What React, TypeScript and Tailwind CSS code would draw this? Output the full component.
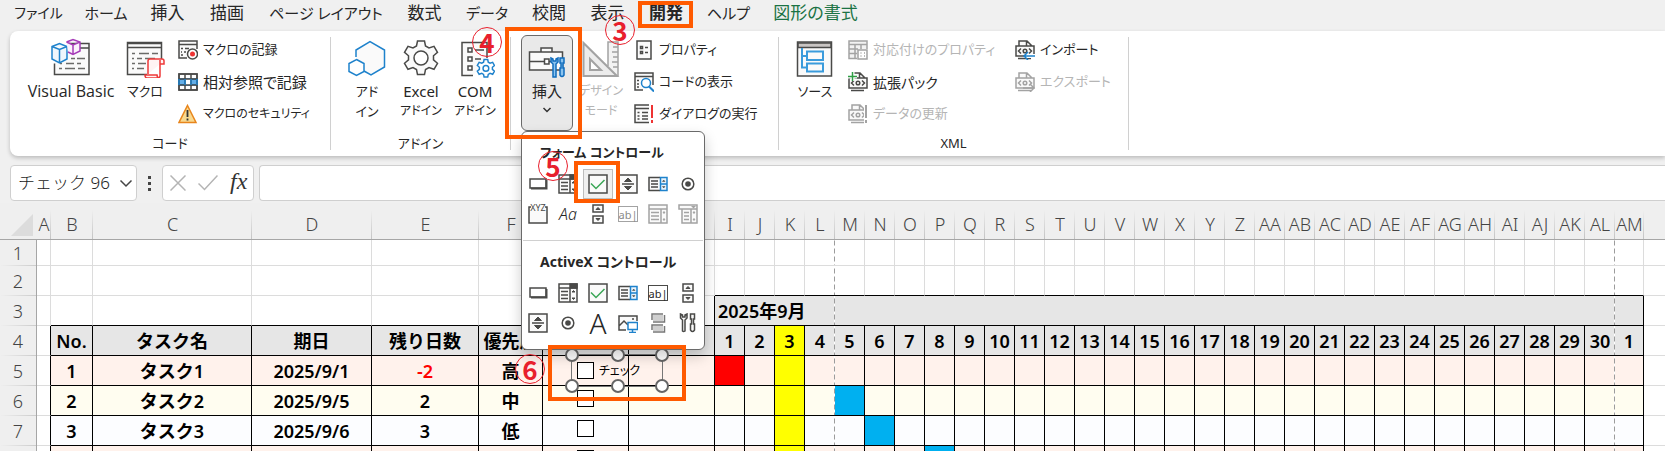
import React from 'react';
import { clsx } from 'clsx';

const INK = '#4a4a48';
const BLUE = '#1e82cc';
const MUTED = '#a3a3a3';

const tabs = [
  { label: 'ファイル', className: 'w-[71px] text-[14px]' },
  { label: 'ホーム', className: 'w-[64px] text-[15px]' },
  { label: '挿入', className: 'w-[59px] text-[17px]' },
  { label: '描画', className: 'w-[60px] text-[17px]' },
  { label: 'ページ レイアウト', className: 'w-[138px] text-[15px]' },
  { label: '数式', className: 'w-[59px] text-[17px]' },
  { label: 'データ', className: 'w-[66px] text-[15px]' },
  { label: '校閲', className: 'w-[58px] text-[17px]' },
  { label: '表示', className: 'w-[59px] text-[17px]' },
  { label: '開発', className: 'w-[58px] text-[17px] font-bold' },
  { label: 'ヘルプ', className: 'w-[67px] text-[15px]' },
  { label: '図形の書式', className: 'w-[107px] text-[17px] text-[#1b7344]' },
];

/* ---------- Large ribbon icons (40x40) ---------- */

const Large: React.FC<{ children: React.ReactNode }> = ({ children }) => (
  <svg width="40" height="40" viewBox="0 0 40 40" fill="none" stroke={INK} strokeWidth="1.5" aria-hidden="true">
    {children}
  </svg>
);

const VisualBasicIcon = () => (
  <Large>
    <path d="M17 5.5h21v31H3.500v-11M28 10h10" fill="#fafafa" />
    <path d="M20 20.500h4M26 20.500h8M9 25.500h2M15 25.500h8M26 25.500h4M8 30.500h3M14 30.500h10M27 30.500h7" stroke="#6b6b69" />
    <path d="M1 8.500 8.500 5.500 16 8.500v12.500L8.500 25 1 21ZM1 8.500l7.500 3 7.500-3M8.500 11.500V25" stroke={BLUE} fill="#eef6fc" />
    <path d="M15.500 4 22 1.500 29 4v9l-7 3.500-5-2.500M15.500 4 22 7l7-3M22 7v9.500" stroke="#a63db8" fill="#fbf1fc" />
  </Large>
);

const MacroIcon = () => (
  <Large>
    <path d="M22 36.500H2.500v-32h34V21" fill="#fafafa" />
    <path d="M2.500 5.500h34M2.500 9.500h34" />
    <path d="M7 15.500h3M14 15.500h10M27 15.500h6M7 20.500h2M12 20.500h5M20 20.500h10M7 25.500h3M13 25.500h8M7 30.500h2M12 30.500h7" stroke="#6b6b69" />
    <path d="M23 36V23q0-2 2-2h12q2 0 2 2v3h-4M35 22v16M35 38q0 2-3 2H22q-2 0-2-3h12q0 3 3 3" stroke="#ee3a3a" fill="#fff4f4" />
  </Large>
);

const AddinIcon = () => (
  <Large>
    <path d="M9 19V12L23 3.500l14.500 8.500v17L24 37l-7-4" stroke={BLUE} fill="#fafafa" />
    <path d="M9.500 21.500l7.500 4v8l-7.500 4-7.500-4v-8Z" stroke={BLUE} fill="#fff" />
  </Large>
);

const GEAR =
  'M16.500 3h7l1 5 3.500 2 5-1.700 3.500 6-4 3.500v4l4 3.500-3.500 6-5-1.700-3.500 2-1 5h-7l-1-5-3.500-2-5 1.700-3.500-6 4-3.500v-4l-4-3.500 3.500-6 5 1.700 3.500-2Z';

const ExcelAddinIcon = () => (
  <Large>
    <path d={GEAR} fill="#fafafa" />
    <circle cx="20" cy="20" r="7" fill="#fff" />
  </Large>
);

const ComAddinIcon = () => (
  <Large>
    <path d="M18 37.500H7v-33h25V20" fill="#fafafa" />
    <path d="M13 10h4v4h-4zM13 19h4v4h-4zM13 28h4v4h-4zM20 12h9M20 21h6" />
    <g transform="translate(20.500 20) scale(.52)" stroke={BLUE} strokeWidth="2.800">
      <path d={GEAR} fill="#fff" />
      <circle cx="20" cy="20" r="5.500" />
    </g>
  </Large>
);

const ToolboxIcon = () => (
  <Large>
    <path d="M2.500 14h33v18h-33zM14 14v-4h11v4M2.500 23.500h15M22 23.500h5" fill="#fafafa" />
    <path d="M17.500 21h4.500v5h-4.500z" fill="#fff" />
    <path d="M24 20v4l2 2v13h3V26l2-2v-4l-2 1v2h-3v-2z" stroke="#0f6cbd" fill="#8cc4ef" />
    <path d="M33 20h4v5h-1v5h1v7q-2 3-4 0v-7h1v-5h-1z" stroke="#0f6cbd" fill="#8cc4ef" />
  </Large>
);

const DesignIcon = () => (
  <Large>
    <path d="M27 28V4h10v34M37 9h-5M37 14h-6M37 19h-5M37 24h-6M37 29h-5" stroke={MUTED} fill="#f3f3f3" />
    <path d="M2.500 5v33H36ZM9 21v11h11Z" stroke={MUTED} fill="#ececec" fillRule="evenodd" strokeWidth="2" />
  </Large>
);

const SourceIcon = () => (
  <Large>
    <path d="M2.500 4h34v34h-34z" fill="#fafafa" />
    <path d="M3 5h33v4.500H3z" fill="#c9c5c3" />
    <path d="M7 10v19.500h4M7 18h4M12 13.500h16v8.500H12zM12 25.500h16v8H12z" stroke="#3a9bdc" strokeWidth="2" />
  </Large>
);

/* ---------- Small icons (20x20) ---------- */

const Small: React.FC<{ children: React.ReactNode; color?: string }> = ({ children, color = INK }) => (
  <svg width="20" height="20" viewBox="0 0 20 20" fill="none" stroke={color} strokeWidth="1.500" className="shrink-0" aria-hidden="true">
    {children}
  </svg>
);

const RecordIcon = () => (
  <Small>
    <path d="M9 18H1V1h18v8M1 4.500h18" fill="#fafafa" />
    <path d="M3 8.500h2M7 8.500h4M3 12h1M6 12h2M3 15h2" />
    <circle cx="14.500" cy="14" r="5" fill="#fff" />
    <circle cx="14.500" cy="14" r="2.500" fill="#e33" stroke="none" />
  </Small>
);

const RelativeIcon = () => (
  <Small>
    <path d="M1 2h18v16H1z" fill="#fff" />
    <path d="M1 7h18v6H1z" fill="#63aee8" stroke={BLUE} />
    <path d="M7.500 7h5v6h-5z" fill="#fff" stroke="none" />
    <path d="M1 2h18v16H1zM7 2v16M13 2v16M1 7h18M1 13h18" />
    <path d="M1 7v6M7 7v6M19 7v6M13 7v6" stroke={BLUE} />
  </Small>
);

const WarningIcon = () => (
  <Small color="#e8851c">
    <path d="M9.500 1.500 18 18.500H1Z" fill="#f9d98f" />
    <path d="M9.500 6v7M9.500 14.500v2" stroke="#333" strokeWidth="1.800" />
  </Small>
);

const PropertiesIcon = () => (
  <Small>
    <path d="M3 1h14v18H3z" fill="#fafafa" />
    <path d="M6.500 6.500h2v2h-2zM6.500 11.500h2v2h-2zM11 7.500h3M11 12.500h3" />
  </Small>
);

const ViewCodeIcon = () => (
  <Small>
    <path d="M9 18H1V1h18v12M1 4.500h18M3 8.500h2M3 12h2M3 15h2" fill="#fafafa" />
    <circle cx="12" cy="11" r="4.500" stroke={BLUE} fill="#fff" />
    <path d="m15 14.500 5 5" stroke={BLUE} strokeWidth="2" />
  </Small>
);

const RunDialogIcon = () => (
  <Small>
    <path d="M15 18.500H1V1h14M1 4.500h14" fill="#fafafa" />
    <path d="M3.500 8.500h2M8 8.500h6M3.500 12h2M8 12h6M3.500 15h2M8 15h6" />
    <path d="M18 1v13M18 16v3" stroke="#e33" strokeWidth="2" />
  </Small>
);

const MapPropertiesIcon = () => (
  <Small color={MUTED}>
    <path d="M9 18.500H1V1h18v8M1 4.500h18M1 9h9M1 13.500h8M7 4v14M13 4v5" fill="#f2f2f2" />
    <path d="M10 10h9v9h-9zM12.500 13h1M16 13h1M12.500 16h1M16 16h1" fill="#fff" />
  </Small>
);

const XmlDoc: React.FC<{ color?: string; children?: React.ReactNode }> = ({ color = INK, children }) => (
  <Small color={color}>
    <path d="M4 6V1h8l5 5M11.500 1v5M3 18.500h13M1 6h18v10H1z" fill="#fafafa" />
    <path d="M6 8.500 3.500 11 6 13.500M14 8.500l2.500 2.500-2.500 2.500" />
    <circle cx="10" cy="11" r="1.800" />
    {children}
  </Small>
);

/* ---------- Toolbox gallery icons ---------- */

const ButtonIcon = () => (
  <Small>
    <path d="M2 5h16v9H2z" fill="#fff" />
    <path d="M3 14.500h15.500V6" strokeWidth="2" />
  </Small>
);

const ComboIcon = ({ color = INK }: { color?: string }) => (
  <Small color={color}>
    <path d="M1 1h18v18H1zM1 5h18M12 5v14" fill="#fafafa" />
    <path d="M3 8.500h7M3 12h7M3 15.500h7" />
    <path d="M12 1h7v4h-7z" fill={color} />
    <path d="m14 9 1.500-1.500L17 9zM14 15l1.500 1.500L17 15z" fill={color} strokeWidth="1" />
  </Small>
);

const ListBoxIcon = ({ color = INK }: { color?: string }) => (
  <Small color={color}>
    <path d="M1 1h18v18H1zM1 5h18M13 5v14" fill="#fafafa" />
    <path d="M3 8.500h8M3 12h8M3 15.500h8" />
    <path d="m15 9 1-1.500L17 9zM15 15l1 1.500 1-1.500z" fill={color} strokeWidth="1" />
  </Small>
);

const ComboEditIcon = () => (
  <Small color={MUTED}>
    <path d="M1 1h18v4H1zM4 5v14h15V5M13 5v14M6 8.500h5M6 12h5M6 15.500h5" fill="#fafafa" />
    <path d="m15 9 1-1.500L17 9zM15 15l1 1.500 1-1.500z" fill={MUTED} strokeWidth="1" />
    <path d="M13 2h5l-2.500 2.500z" fill={MUTED} strokeWidth="0" />
  </Small>
);

const CheckIcon = () => (
  <Small>
    <path d="M1 1h18v18H1z" fill="#fafafa" />
    <path d="m3 9.500 5 5 8.500-8.500" stroke="#3aa655" strokeWidth="1.500" />
  </Small>
);

const SpinIcon = () => (
  <Small>
    <path d="M1 1h18v18H1zM4 10h12" fill="#fafafa" />
    <path d="m6.500 7.500 3.500-3.500 3.500 3.500zM6.500 12.500l3.500 3.500 3.500-3.500z" fill={INK} strokeWidth="1" />
  </Small>
);

const ListIcon = () => (
  <Small>
    <path d="M12 3.500H1v13h11M3 7h7M3 10h7M3 13h7" fill="#fafafa" />
    <path d="M12.500 3.500H19v13h-6.500zM12.500 10H19" stroke={BLUE} fill="#e8f3fc" />
    <path d="m14.500 7.500 1.200-1.500L17 7.500zM14.500 12.500l1.200 1.500 1.300-1.500z" fill={INK} strokeWidth=".5" />
  </Small>
);

const RadioIcon = () => (
  <Small>
    <circle cx="10" cy="10" r="5.800" fill="#fff" />
    <circle cx="10" cy="10" r="2.800" fill={INK} stroke="none" />
  </Small>
);

const GroupBoxIcon = () => (
  <Small>
    <path d="M3 3H1v16h18V3h-2" fill="#fafafa" />
    <text x="10" y="7" fontSize="9" textAnchor="middle" fill={INK} stroke="none">
      XYZ
    </text>
  </Small>
);

const ScrollIcon = () => (
  <Small>
    <path d="M5 1h10v7H5zM5 12h10v7H5z" fill="#fafafa" />
    <path d="m8 5.500 2-2 2 2zM8 14.500l2 2 2-2z" fill={INK} strokeWidth="1" />
  </Small>
);

const ImageIcon = () => (
  <Small>
    <path d="M8 17H1V3h18v5M1 13l5-5 4 4M14 6h2" fill="#fafafa" />
    <path d="M10 9.500h9.500v7H10zM14.500 17v2.500M11 19.500h7" stroke={BLUE} fill="#fff" />
  </Small>
);

const ToggleIcon = () => (
  <Small color="#777">
    <path d="M4 7V1h11M16.500 2v7H5M16.500 13v6H5M4 17v-5h11" />
    <path d="M5 2h10v6H5zM5 13h10v5H5z" fill="#cfcfcf" stroke="none" />
  </Small>
);

const ToolsIcon = () => (
  <Small>
    <path d="M2.500 1v4l2 2v11q1 1 2.500 0V7l2-2V1L7 2v2H4.500V2z" fill="#fafafa" />
    <path d="M12.500 1h4v5h-1v5h1v6q-2 3-4 0v-6h1V6h-1z" fill="#fafafa" />
  </Small>
);

const TextGlyph: React.FC<{ text: string; className: string }> = ({ text, className }) => (
  <span className={clsx('flex items-center justify-center leading-none', className)}>{text}</span>
);

const formControls = [
  { name: 'ボタン', icon: <ButtonIcon /> },
  { name: 'コンボ ボックス', icon: <ComboIcon /> },
  { name: 'チェック ボックス', icon: <CheckIcon />, active: true },
  { name: 'スピン ボタン', icon: <SpinIcon /> },
  { name: 'リスト ボックス', icon: <ListIcon /> },
  { name: 'オプション ボタン', icon: <RadioIcon /> },
  { name: 'グループ ボックス', icon: <GroupBoxIcon /> },
  { name: 'ラベル', icon: <TextGlyph text="Aa" className="text-[16px] font-light italic" /> },
  { name: 'スクロール バー', icon: <ScrollIcon /> },
  { name: 'テキスト フィールド', icon: <TextGlyph text="ab|" className="h-4 w-5 border border-[#a3a3a3] text-[11px] text-[#8a8a8a]" /> },
  { name: 'コンボ リスト', icon: <ListBoxIcon color={MUTED} /> },
  { name: 'コンボ ドロップダウン', icon: <ComboEditIcon /> },
];

const activeXControls = [
  { name: 'コマンド ボタン', icon: <ButtonIcon /> },
  { name: 'コンボ ボックス', icon: <ComboIcon /> },
  { name: 'チェック ボックス', icon: <CheckIcon /> },
  { name: 'リスト ボックス', icon: <ListIcon /> },
  { name: 'テキスト ボックス', icon: <TextGlyph text="ab|" className="h-4 w-5 border border-[#4a4a48] text-[11px]" /> },
  { name: 'スクロール バー', icon: <ScrollIcon /> },
  { name: 'スピン ボタン', icon: <SpinIcon /> },
  { name: 'オプション ボタン', icon: <RadioIcon /> },
  { name: 'ラベル', icon: <TextGlyph text="A" className="text-[28px] font-light" /> },
  { name: 'イメージ', icon: <ImageIcon /> },
  { name: 'トグル ボタン', icon: <ToggleIcon /> },
  { name: 'コントロールの選択', icon: <ToolsIcon /> },
];

interface GalleryProps {
  title: string;
  titleClass: string;
  items: { name: string; icon: React.ReactNode; active?: boolean }[];
}

const Gallery: React.FC<GalleryProps> = ({ title, titleClass, items }) => (
  <section>
    <h2 className={clsx('flex h-[37px] items-center pt-1 pl-[17px] font-bold whitespace-nowrap', titleClass)}>{title}</h2>
    <div className="grid w-[180px] grid-cols-6">
      {items.map(item => (
        <button
          key={item.name}
          aria-label={item.name}
          className={clsx(
            'flex size-[30px] items-center justify-center border',
            item.active ? 'border-[#bdbdbd] bg-[#f0f0f0]' : 'border-transparent'
          )}
        >
          {item.icon}
        </button>
      ))}
    </div>
  </section>
);

/* ---------- Ribbon pieces ---------- */

const BigButton: React.FC<{ icon: React.ReactNode; lines: string[]; className: string }> = ({ icon, lines, className }) => (
  <button className={clsx('flex flex-col items-center pt-[7px] leading-5 whitespace-nowrap', className)}>
    {icon}
    <span className="flex flex-col items-center pt-[3px]">
      {lines.map(line => (
        <span key={line}>{line}</span>
      ))}
    </span>
  </button>
);

const SmallButton: React.FC<{ icon: React.ReactNode; label: string; className?: string; disabled?: boolean }> = ({
  icon,
  label,
  className = 'text-[15px]',
  disabled
}) => (
  <button disabled={disabled} className={clsx('flex h-8 items-center gap-[5px] whitespace-nowrap', className, disabled && 'text-[#b5b5b5]')}>
    {icon}
    <span>{label}</span>
  </button>
);

const Group: React.FC<{ label?: string; className: string; children: React.ReactNode }> = ({ label, className, children }) => (
  <>
    <div className={clsx('flex shrink-0 flex-col', className)}>
      <div className="flex flex-1 items-start">{children}</div>
      {label && <div className="pb-[3px] text-center text-[13px] leading-5">{label}</div>}
    </div>
    <div className="my-1.5 w-px shrink-0 bg-[#d0d0d0]" />
  </>
);

const Ribbon = () => (
  <div className="relative z-20 ml-2.5 flex h-[125px] shrink-0 rounded-l-lg bg-white text-[#262626] shadow-[0_2px_4px_rgba(0,0,0,0.22)]">
    <Group label="コード" className="w-[320px]">
      <BigButton icon={<VisualBasicIcon />} lines={['Visual Basic']} className="ml-2.5 w-[102px] font-['Open_Sans','Noto_Sans_CJK_JP',sans-serif] text-[16px]" />
      <BigButton icon={<MacroIcon />} lines={['マクロ']} className="w-[46px] text-[13px]" />
      <div className="mt-[3px] ml-2.5">
        <SmallButton icon={<RecordIcon />} label="マクロの記録" className="text-[13px]" />
        <SmallButton icon={<RelativeIcon />} label="相対参照で記録" />
        <SmallButton icon={<WarningIcon />} label="マクロのセキュリティ" className="text-[12px]" />
      </div>
    </Group>
    <Group label="アドイン" className="w-[179px]">
      <BigButton icon={<AddinIcon />} lines={['アド', 'イン']} className="ml-[9px] w-[54px] text-[13px]" />
      <BigButton icon={<ExcelAddinIcon />} lines={['Excel', 'アドイン']} className="w-[54px] text-[12px] [&>span>span:first-child]:text-[15px]" />
      <BigButton icon={<ComAddinIcon />} lines={['COM', 'アドイン']} className="w-[54px] text-[12px] [&>span>span:first-child]:text-[15px]" />
    </Group>
    <Group className="w-[267px]">
      <div className="relative mt-1 ml-2.5">
        <button
          aria-expanded="true"
          className="flex h-24 w-[52px] flex-col items-center rounded-md border border-[#6a6a6a] bg-[#e9e9e9] pt-0.5 leading-5"
        >
          <ToolboxIcon />
          <span className="pt-[3px] text-[15px]">挿入</span>
          <svg width="10" height="6" viewBox="0 0 10 6" fill="none" stroke="#333" strokeWidth="1.500" className="mt-1.5" aria-hidden="true">
            <path d="m1.500 1 3.500 3.500L8.500 1" />
          </svg>
        </button>
        <div className="absolute top-24 left-0 w-[184px] rounded-md border border-[#6a6a6a] bg-white pb-[11px] pl-px shadow-[0_6px_14px_rgba(0,0,0,0.2)]">
          <Gallery title="フォーム コントロール" titleClass="text-[13px]" items={formControls} />
          <div className="mt-[11px] mr-px h-px bg-[#d0d0d0]" />
          <Gallery title="ActiveX コントロール" titleClass="text-[14px]" items={activeXControls} />
        </div>
      </div>
      <BigButton icon={<DesignIcon />} lines={['デザイン', 'モード']} className="ml-px w-[54px] text-[12px] text-[#b5b5b5]" />
      <div className="mt-[3px] ml-1.5">
        <SmallButton icon={<PropertiesIcon />} label="プロパティ" className="text-[13px]" />
        <SmallButton icon={<ViewCodeIcon />} label="コードの表示" className="text-[13px]" />
        <SmallButton icon={<RunDialogIcon />} label="ダイアログの実行" className="text-[13px]" />
      </div>
    </Group>
    <Group label="XML" className="w-[349px]">
      <BigButton icon={<SourceIcon />} lines={['ソース']} className="ml-[11px] w-[50px] text-[13px]" />
      <div className="mt-[3px] ml-2 w-[167px]">
        <SmallButton icon={<MapPropertiesIcon />} label="対応付けのプロパティ" className="text-[13px]" disabled />
        <SmallButton
          icon={
            <XmlDoc>
              <path d="M4.500 0v9M0 4.500h9" stroke="#fff" strokeWidth="4" />
              <path d="M4.500 0v9M0 4.500h9" stroke="#2f9e44" />
            </XmlDoc>
          }
          label="拡張パック"
          className="text-[14px]"
        />
        <SmallButton
          icon={
            <XmlDoc color={MUTED}>
              <path d="M18 1v18" stroke="#fff" strokeWidth="4" />
              <path d="M18 1v13M18 16v3" strokeWidth="2" />
            </XmlDoc>
          }
          label="データの更新"
          className="text-[13px]"
          disabled
        />
      </div>
      <div className="mt-[3px]">
        <SmallButton
          icon={
            <XmlDoc>
              <path d="M20 16H9" stroke="#fff" strokeWidth="4" />
              <path d="M20 16H9M13 12l-4 4 4 4" stroke={BLUE} />
            </XmlDoc>
          }
          label="インポート"
          className="text-[13px]"
        />
        <SmallButton
          icon={
            <XmlDoc color={MUTED}>
              <path d="M8 16h11M15 12l4 4-4 4" />
            </XmlDoc>
          }
          label="エクスポート"
          className="text-[13px]"
          disabled
        />
      </div>
    </Group>
  </div>
);

const FormulaBar = () => (
  <div className="flex h-[47px] shrink-0 items-center pt-[9px] pb-0.5 pl-2.5">
    <div className="flex h-9 w-[127px] items-center rounded border border-[#cfcfcf] bg-white pl-[7px]">
      <input
        aria-label="名前ボックス"
        defaultValue="チェック 96"
        className="w-[101px] min-w-0 text-[17px] font-light text-[#222] outline-none [font-feature-settings:normal]"
      />
      <button aria-label="名前の一覧">
        <svg width="14" height="9" viewBox="0 0 14 9" fill="none" stroke="#444" strokeWidth="1.500" aria-hidden="true">
          <path d="m1.500 1.500 5.500 5.500 5.500-5.500" />
        </svg>
      </button>
    </div>
    <div className="flex w-[25px] flex-col items-center gap-[3px]">
      <span className="size-[3px] bg-[#444]" />
      <span className="size-[3px] bg-[#444]" />
      <span className="size-[3px] bg-[#444]" />
    </div>
    <div className="flex h-9 w-[92px] items-center rounded border border-[#cfcfcf] bg-white pl-[7px]">
      <button aria-label="キャンセル">
        <svg width="16" height="16" viewBox="0 0 16 16" stroke="#b4b4b4" strokeWidth="1.500" aria-hidden="true">
          <path d="m.5.5 15 15M15.500.5l-15 15" />
        </svg>
      </button>
      <button aria-label="入力" className="ml-3">
        <svg width="20" height="16" viewBox="0 0 20 16" fill="none" stroke="#b4b4b4" strokeWidth="1.500" aria-hidden="true">
          <path d="m.5 8.500 6 6L19.500.5" />
        </svg>
      </button>
      <button className="ml-3 pb-1 font-['Liberation_Serif',serif] text-[24px] leading-6 text-[#333] italic">fx</button>
    </div>
    <input aria-label="数式バー" className="ml-[5px] h-9 min-w-0 flex-1 rounded-l border border-r-0 border-[#cfcfcf] bg-white px-2 text-[17px] outline-none" />
  </div>
);

/* ---------- Worksheet ---------- */

const letters = 'ABCDEFGHIJKLMNOPQRSTUVWXYZ'.split('');
const columns = [...letters, ...letters.slice(0, 13).map(l => `A${l}`)];
const dayColumns = columns.slice(8);

const columnWidth = (col: string) => {
  switch (col) {
    case 'A': return 'w-[14px]';
    case 'B': return 'w-[42px]';
    case 'C': return 'w-[159px]';
    case 'D': return 'w-[120px]';
    case 'E': return 'w-[107px]';
    case 'F': return 'w-[64px]';
    case 'G':
    case 'H': return 'w-[86px]';
    case 'AM': return 'w-[29px]';
    default: return 'w-[30px]';
  }
};

const tasks = [
  { row: 5, no: '1', name: 'タスク1', due: '2025/9/1', left: '-2', priority: '高', bar: 'I', fill: 'bg-[#fff2ec]' },
  { row: 6, no: '2', name: 'タスク2', due: '2025/9/5', left: '2', priority: '中', bar: 'M', fill: 'bg-[#fffdf0]' },
  { row: 7, no: '3', name: 'タスク3', due: '2025/9/6', left: '3', priority: '低', bar: 'N', fill: 'bg-[#fcfdff]' },
  { row: 8, no: '', name: '', due: '', left: '', priority: '', bar: 'P', fill: 'bg-[#fff2ec]' },
];

// Dashed automatic page break, drawn in place of the right border
const pageBreak = 'bg-[linear-gradient(to_bottom,#9c9c9c_5px,#ffffff_5px)] bg-[length:1px_8px] bg-right bg-repeat-y';
const isBreak = (col: string) => col === 'L' || col === 'AL';
const rightEdge = (col: string, color: string) => (isBreak(col) ? pageBreak : `border-r ${color}`);

const gray = 'border-[#dcdcdc]';
const black = 'border-black';

const RowHead: React.FC<{ n: number; className?: string }> = ({ n, className = 'h-[30px]' }) => (
  <th
    scope="row"
    className={clsx(
      'border-r border-[#a6a6a6] bg-[#efefef] bg-[linear-gradient(to_right,transparent,#cccccc)] bg-[length:100%_1px] bg-bottom bg-no-repeat font-light text-[#444]',
      className
    )}
  >
    {n < 8 ? n : ''}
  </th>
);

const BlankRow: React.FC<{ n: number; className: string }> = ({ n, className }) => (
  <tr>
    <RowHead n={n} className={className} />
    {columns.map((col, i) => (
      <td key={col} className={clsx('border-b', rightEdge(col, 'border-r-[#dcdcdc]'), n === 2 && i > 7 ? 'border-b-black' : 'border-b-[#dcdcdc]')} />
    ))}
    <td className={clsx('border-b', gray)} />
  </tr>
);

const Box: React.FC<{ label: string }> = ({ label }) => (
  <input type="checkbox" aria-label={label} className="block size-[17px] shrink-0 appearance-none border border-black bg-white" />
);

const Handle: React.FC<{ className: string }> = ({ className }) => (
  <span className={clsx('absolute size-3.5 rounded-full border-2 border-[#666] bg-white', className)} />
);

// The form control while it is being edited, floating over the grid
const SelectedCheckBox = () => (
  <div className="absolute -top-0.5 left-7 z-10 flex h-[33px] w-[92px] items-center border border-[#777] pl-[5px]">
    <label className="flex items-center gap-[5px] text-[12px] font-normal whitespace-nowrap [font-feature-settings:'palt']">
      <input type="checkbox" className="size-[17px] shrink-0 appearance-none border border-black bg-white" />
      チェック
    </label>
    <Handle className="-top-[7px] -left-[7px]" />
    <Handle className="-top-[7px] left-[39px]" />
    <Handle className="-top-[7px] -right-[7px]" />
    <Handle className="-bottom-[7px] -left-[7px]" />
    <Handle className="-bottom-[7px] left-[39px]" />
    <Handle className="-right-[7px] -bottom-[7px]" />
  </div>
);

const Sheet = () => (
  <table className="w-full table-fixed border-separate border-spacing-0 bg-white text-center text-[18px] leading-none whitespace-nowrap text-black [font-feature-settings:normal] [&_td]:p-0 [&_th]:p-0">
    <thead>
      <tr className="h-[37px] bg-[#efefef] text-[#444]">
        <th className="w-[37px] border-b border-[#a6a6a6]" aria-label="すべて選択">
          <svg width="22" height="22" viewBox="0 0 22 22" className="mt-[7px] ml-[11px] block" aria-hidden="true">
            <path d="M22 0v22H0z" fill="#dcdcdc" />
          </svg>
        </th>
        {columns.map(col => (
          <th
            key={col}
            scope="col"
            className={clsx(
              'border-b border-[#a6a6a6] bg-[linear-gradient(to_bottom,transparent_20%,#c4c4c4)] bg-[length:1px_100%] bg-right bg-no-repeat font-light',
              columnWidth(col)
            )}
          >
            <span className="flex justify-center pt-1.5">{col}</span>
          </th>
        ))}
        <th className="border-b border-[#a6a6a6]" />
      </tr>
    </thead>
    <tbody className="font-semibold">
      <BlankRow n={1} className="h-[26px]" />
      <BlankRow n={2} className="h-[30px]" />
      <tr>
        <RowHead n={3} />
        {columns.slice(0, 8).map(col => (
          <td
            key={col}
            className={clsx('border-r border-b', col === 'H' ? 'border-r-black' : 'border-r-[#dcdcdc]', col === 'A' ? 'border-b-[#dcdcdc]' : 'border-b-black')}
          />
        ))}
        <td colSpan={4} className={clsx('border-b bg-[#e6e6e6]', black, pageBreak)}>
          <span className="block pl-[3px] text-left">2025年9月</span>
        </td>
        <td colSpan={26} className={clsx('border-b bg-[#e6e6e6]', black, pageBreak)} />
        <td className={clsx('border-r border-b bg-[#e6e6e6]', black)} />
        <td className={clsx('border-b', gray)} />
      </tr>
      <tr>
        <RowHead n={4} />
        <td className="border-r border-b border-r-black border-b-[#dcdcdc]" />
        {['No.', 'タスク名', '期日', '残り日数', '優先度', '', ''].map((title, i) => (
          <td key={i} className={clsx('border-r border-b bg-[#e6e6e6]', black)}>
            {title}
          </td>
        ))}
        {dayColumns.map((col, i) => (
          <td key={col} className={clsx('border-b', black, rightEdge(col, 'border-r-black'), col === 'K' ? 'bg-[#ffff00]' : 'bg-[#e6e6e6]')}>
            {(i % 30) + 1}
          </td>
        ))}
        <td className={clsx('border-b', gray)} />
      </tr>
      {tasks.map(task => (
        <tr key={task.row}>
          <RowHead n={task.row} />
          <td className="border-r border-b border-r-black border-b-[#dcdcdc]" />
          {[task.no, task.name, task.due, task.left, task.priority].map((value, i) => (
            <td key={i} className={clsx('border-r border-b', black, task.fill, value === '-2' && 'text-[#ff0000]')}>
              {value}
            </td>
          ))}
          <td className={clsx('relative border-r border-b align-top', black, task.fill)}>
            {task.row === 5 ? (
              <SelectedCheckBox />
            ) : (
              <div className="pt-1 pl-[34px]">
                <Box label={`完了 ${task.row}`} />
              </div>
            )}
          </td>
          <td className={clsx('border-r border-b', black, task.fill)} />
          {dayColumns.map(col => (
            <td
              key={col}
              className={clsx(
                'border-b',
                black,
                rightEdge(col, 'border-r-black'),
                col === 'K' ? 'bg-[#ffff00]' : col !== task.bar ? task.fill : col === 'I' ? 'bg-[#ff0000]' : 'bg-[#00b0f0]'
              )}
            />
          ))}
          <td className={clsx('border-b', gray)} />
        </tr>
      ))}
    </tbody>
  </table>
);

/* ---------- Step markers over the window ---------- */

const Frame: React.FC<{ className: string }> = ({ className }) => (
  <div className={clsx('pointer-events-none absolute z-30 border-4 border-[#ff5a00]', className)} />
);

const Step: React.FC<{ n: number; className: string }> = ({ n, className }) => (
  <div
    className={clsx(
      "pointer-events-none absolute z-40 flex size-[30px] items-center justify-center rounded-full border border-[#e8202d] font-['Noto_Sans_CJK_JP',sans-serif] text-[26px] leading-none font-bold text-[#e8202d]",
      className
    )}
  >
    {n}
  </div>
);

const App: React.FC = () => (
  <div className="relative flex h-screen flex-col overflow-hidden bg-[#f0f0f0] font-['Noto_Sans','Noto_Sans_CJK_JP',sans-serif] text-[#262626] [font-feature-settings:'palt']">
    <nav className="flex h-[31px] shrink-0 items-center pb-1.5 pl-[3px]">
      {tabs.map(tab => (
        <button key={tab.label} className={clsx('shrink-0 leading-6 whitespace-nowrap', tab.className)}>
          {tab.label}
        </button>
      ))}
    </nav>
    <Ribbon />
    <FormulaBar />
    <div className="shrink-0">
      <Sheet />
    </div>

    <Frame className="top-px left-[638px] h-[27px] w-[55px]" />
    <Frame className="top-[27px] left-[505px] h-[112px] w-[77px]" />
    <Frame className="top-[161px] left-[574px] h-[42px] w-[46px]" />
    <Frame className="top-[345px] left-[548px] h-[56px] w-[138px]" />
    <Step n={3} className="top-[15px] left-[605px]" />
    <Step n={4} className="top-[27px] left-[472px]" />
    <Step n={5} className="top-[151px] left-[538px]" />
    <Step n={6} className="top-[354px] left-[515px]" />
  </div>
);

export default App;
